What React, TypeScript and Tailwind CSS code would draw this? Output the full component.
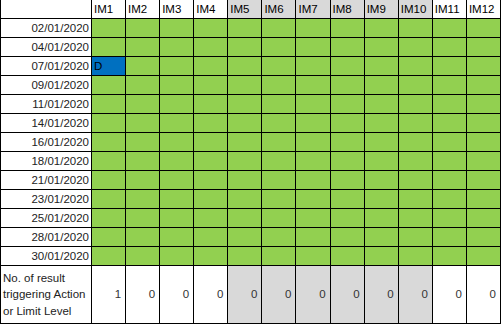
const cols = ["IM1", "IM2", "IM3", "IM4", "IM5", "IM6", "IM7", "IM8", "IM9", "IM10", "IM11", "IM12"]
const dates = [
  "02/01/2020",
  "04/01/2020",
  "07/01/2020",
  "09/01/2020",
  "11/01/2020",
  "14/01/2020",
  "16/01/2020",
  "18/01/2020",
  "21/01/2020",
  "23/01/2020",
  "25/01/2020",
  "28/01/2020",
  "30/01/2020",
]
const totals = [1, 0, 0, 0, 0, 0, 0, 0, 0, 0, 0, 0]

// IM5 - IM10 are shaded grey
const isGrey = (i: number) => i >= 4 && i <= 9

const App = () => {
  return (
    <main className="w-[501px] h-[325px] bg-white font-['Liberation_Sans',Arial,sans-serif] text-[11.5px] text-black leading-none">
      <div className="w-[501px] grid grid-cols-[91px_repeat(12,1fr)] grid-rows-[19px_repeat(13,19px)_58px] border-l border-black">
        <div className="border-r border-b border-black bg-white" />
        {cols.map((c, i) => (
          <div
            key={c}
            className={`border-r border-b border-black flex items-center pl-[2px] pt-[1px] ${isGrey(i) ? "bg-[#d9d9d9]" : "bg-white"}`}
          >
            {c}
          </div>
        ))}

        {dates.map((d, r) => (
          <div key={d} className="contents">
            <div className="border-r border-b border-black flex items-center justify-end pr-[2px] pt-[1px] text-[#222]">
              {d}
            </div>
            {cols.map((c, i) => (
              <div
                key={c}
                className={`border-r border-b border-black flex items-center pl-[2px] pt-[1px] ${r === 2 && i === 0 ? "bg-[#0070c0]" : "bg-[#92d050]"}`}
              >
                {r === 2 && i === 0 ? "D" : ""}
              </div>
            ))}
          </div>
        ))}

        <div className="border-r border-b border-black flex flex-col justify-center pl-[2px] leading-[16.5px] text-[#222]">
          <span>No. of result</span>
          <span>triggering Action</span>
          <span>or Limit Level</span>
        </div>
        {totals.map((t, i) => (
          <div
            key={i}
            className={`border-r border-b border-black flex items-center justify-end pr-[4px] pt-[1px] text-[#333] ${isGrey(i) ? "bg-[#d9d9d9]" : "bg-white"}`}
          >
            {t}
          </div>
        ))}
      </div>
    </main>
  )
}

export default App
